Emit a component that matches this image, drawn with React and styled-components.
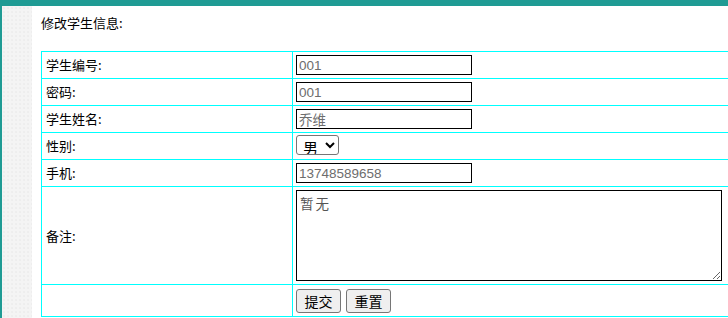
import React from 'react';
import styled, { createGlobalStyle } from 'styled-components';

const GlobalStyle = createGlobalStyle`
  html, body {
    margin: 0;
    padding: 0;
    background: #fff;
    overflow: hidden;
  }
  body {
    font-family: "Noto Sans CJK SC", "Liberation Sans", sans-serif;
    font-size: 13px;
    color: #000;
  }
`;

const Page = styled.div`
  width: 728px;
  height: 318px;
  display: flex;
  flex-direction: column;
  overflow: hidden;
`;

const TopBar = styled.div`
  height: 6px;
  flex-shrink: 0;
  background: #1f9b94;
`;

const Body = styled.div`
  flex: 1;
  display: flex;
`;

const SideStrip = styled.div`
  width: 30px;
  flex-shrink: 0;
  border-left: 2px solid #1f9b94;
  background-color: #f4f4f4;
  background-image: radial-gradient(#e6e6e6 0.6px, transparent 0.8px);
  background-size: 4px 4px;
`;

const Main = styled.div`
  flex: 1;
  padding: 7px 0 0 9px;
  overflow: hidden;
`;

const Title = styled.div`
  line-height: 20px;
  height: 20px;
  margin-bottom: 18px;
`;

const Table = styled.table`
  border-collapse: collapse;
  width: 700px;
  table-layout: fixed;
`;

const Row = styled.tr`
  height: ${p => p.$h}px;
`;

const Label = styled.td`
  width: 246px;
  border: 1px solid #00ffff;
  padding: 0 0 0 4px;
  vertical-align: middle;
  line-height: 20px;
`;

const Field = styled.td`
  border: 1px solid #00ffff;
  padding: 0 0 0 3px;
  vertical-align: middle;
`;

const TextInput = styled.input`
  box-sizing: border-box;
  width: 176px;
  height: 20px;
  margin: 0;
  padding: 0 2px;
  border: 1px solid #000;
  font-family: "Liberation Sans", "Noto Sans CJK SC", sans-serif;
  font-size: 13.5px;
  color: #6d6d6d;
  outline: none;
`;

const Select = styled.select`
  box-sizing: border-box;
  height: 20px;
  width: 43px;
  margin: 0;
  padding: 0 0 0 2px;
  border: 1px solid #767676;
  border-radius: 3px;
  font-family: "Noto Sans CJK SC", sans-serif;
  font-size: 15px;
  color: #000;
  background: #fff;
`;

const Memo = styled.textarea`
  box-sizing: border-box;
  display: block;
  width: 426px;
  height: 91px;
  margin: 2px 0 2px 0;
  padding: 2px 3px;
  border: 1px solid #000;
  font-family: "Noto Sans CJK SC", monospace;
  font-size: 13.5px;
  letter-spacing: 2px;
  color: #555;
  outline: none;
`;

const Actions = styled.div`
  display: flex;
  gap: 5px;
`;

const Button = styled.button`
  box-sizing: border-box;
  width: 45px;
  height: 24px;
  margin: 0;
  padding: 0;
  border: 1px solid #767676;
  border-radius: 3px;
  background: #efefef;
  font-family: "Noto Sans CJK SC", sans-serif;
  font-size: 14px;
  color: #000;
`;

const rows = [
  { label: '学生编号:', value: '001' },
  { label: '密码:', value: '001' },
  { label: '学生姓名:', value: '乔维' },
];

export default function App() {
  return (
    <>
      <GlobalStyle />
      <Page>
        <TopBar />
        <Body>
          <SideStrip />
          <Main>
            <Title>修改学生信息:</Title>
            <Table>
              <tbody>
                {rows.map(r => (
                  <Row $h={27} key={r.label}>
                    <Label>{r.label}</Label>
                    <Field>
                      <TextInput defaultValue={r.value} />
                    </Field>
                  </Row>
                ))}
                <Row $h={27}>
                  <Label>性别:</Label>
                  <Field>
                    <Select defaultValue="男">
                      <option>男</option>
                      <option>女</option>
                    </Select>
                  </Field>
                </Row>
                <Row $h={27}>
                  <Label>手机:</Label>
                  <Field>
                    <TextInput defaultValue="13748589658" />
                  </Field>
                </Row>
                <Row $h={98}>
                  <Label>备注:</Label>
                  <Field>
                    <Memo defaultValue="暂无" />
                  </Field>
                </Row>
                <Row $h={32}>
                  <Label />
                  <Field>
                    <Actions>
                      <Button>提交</Button>
                      <Button>重置</Button>
                    </Actions>
                  </Field>
                </Row>
              </tbody>
            </Table>
          </Main>
        </Body>
      </Page>
    </>
  );
}
